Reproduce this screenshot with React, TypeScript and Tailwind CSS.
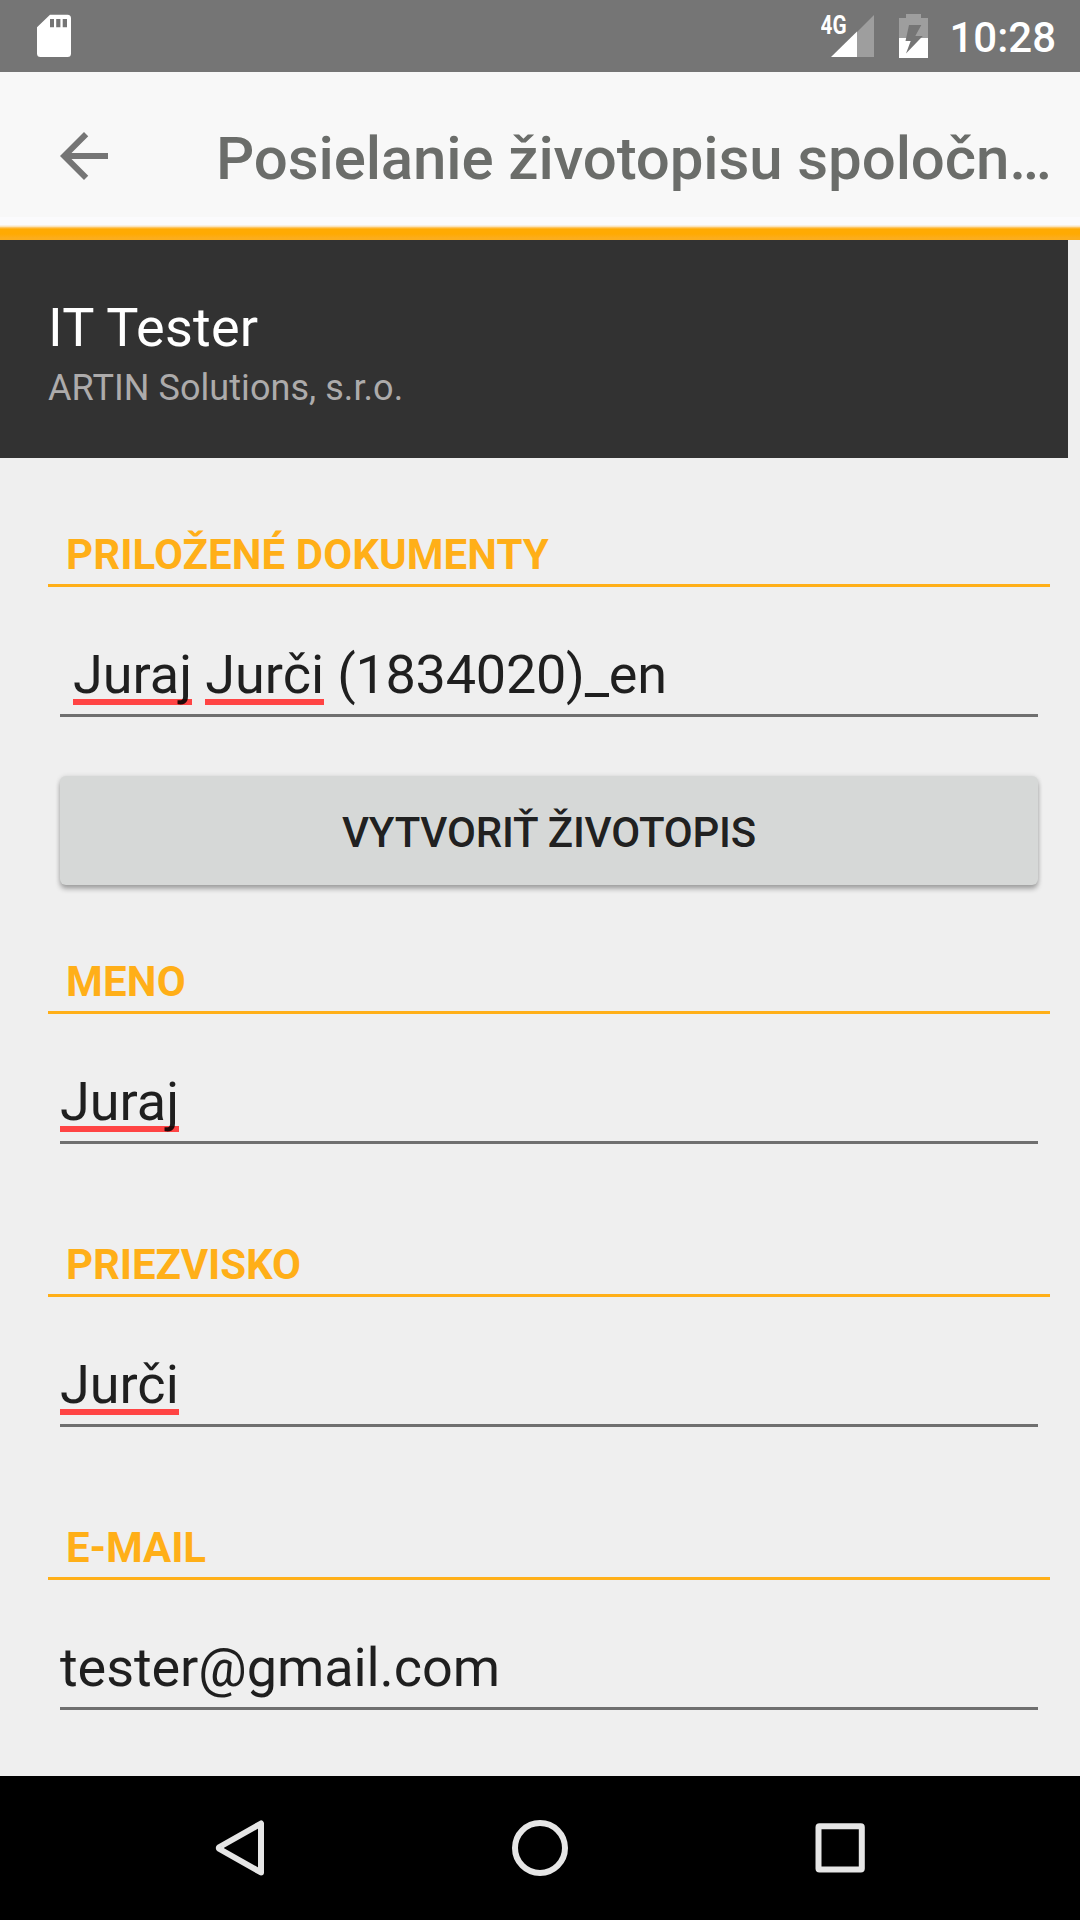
import React, { useState } from 'react';

interface Section {
  label: string;
  labelTracking: string;
  value: string;
  valueTracking: string;
  // words that the spell checker marks
  misspelled: string[];
  indent?: boolean;
  action?: string;
}

const sections: Section[] = [
  {
    label: 'PRILOŽENÉ DOKUMENTY',
    labelTracking: 'tracking-[0.08px]',
    value: 'Juraj Jurči (1834020)_en',
    valueTracking: 'tracking-[-0.25px]',
    misspelled: ['Juraj', 'Jurči'],
    indent: true,
    action: 'VYTVORIŤ ŽIVOTOPIS'
  },
  {
    label: 'MENO',
    labelTracking: 'tracking-[0.2px]',
    value: 'Juraj',
    valueTracking: 'tracking-normal',
    misspelled: ['Juraj']
  },
  {
    label: 'PRIEZVISKO',
    labelTracking: 'tracking-[-0.12px]',
    value: 'Jurči',
    valueTracking: 'tracking-normal',
    misspelled: ['Jurči']
  },
  {
    label: 'E-MAIL',
    labelTracking: 'tracking-[-0.1px]',
    value: 'tester@gmail.com',
    valueTracking: 'tracking-[-0.08px]',
    misspelled: []
  }
];

const StatusBar = () => (
  <div className="h-[72px] shrink-0 bg-[#757575] flex items-center pl-9 pr-6">
    {/* SD card */}
    <svg className="w-9 h-[72px]" viewBox="36 0 36 72">
      <path
        fill="#fff"
        fillRule="evenodd"
        d="M50 14.7H67.5Q71 14.7 71 18.2V53.5Q71 57 67.5 57H40.5Q37 57 37 53.5V27.3ZM50 19V27.3H54V19ZM56.2 19V27.3H60.4V19ZM62.7 19V27.3H67V19Z"
      />
    </svg>

    <div className="ml-auto flex items-center">
      {/* Signal */}
      <svg className="w-[54px] h-[72px]" viewBox="821 0 54 72">
        <path fill="#9e9e9e" d="M857 32L874 15V57H857Z" />
        <path fill="#fff" d="M831 57L857 31.5V57Z" />
        <text
          x="820.6"
          y="33.5"
          fill="#fff"
          fontSize="26"
          fontWeight="700"
          fontFamily="Roboto, sans-serif"
          textLength="26"
          lengthAdjust="spacingAndGlyphs"
        >
          4G
        </text>
      </svg>

      {/* Battery */}
      <svg className="ml-6 w-[30px] h-[72px]" viewBox="899 0 30 72">
        <path fill="#9e9e9e" d="M906 14H921V18H928V38H899V18H906Z" />
        <path fill="#fff" d="M899 38H928V58H899Z" />
        <path fill="#757575" d="M909 25H921.3L915.3 36H922.8L906 53.5L910.7 41H905.5Z" />
      </svg>

      <span className="ml-5 pt-[3px] text-[42px] leading-[48px] font-medium text-white">10:28</span>
    </div>
  </div>
);

const AppBar = () => (
  <header className="h-[168px] shrink-0 flex flex-col bg-[#f8f8f8]">
    <div className="h-[145px] flex items-start pl-12">
      <button className="mt-12">
        <svg className="size-[72px]" viewBox="0 0 24 24">
          <path
            fill="#757575"
            d="M20 11H7.83l5.59-5.59L12 4l-8 8 8 8 1.41-1.41L7.83 13H20v-2z"
          />
        </svg>
      </button>
      <h1 className="ml-24 mt-[51px] text-[60px] leading-[72px] tracking-[-0.12px] font-medium text-[#6b6d6a] whitespace-nowrap">
        Posielanie životopisu spoločn…
      </h1>
    </div>
    <div className="h-2 bg-[#fbfbfd]" />
    <div className="h-[15px] bg-[linear-gradient(to_bottom,#fbf8f4_0px,#fbe3b8_1.5px,#fdb83a_3px,#ffaa02_4.5px,#ffaa02_9px,#fcad1c_13px)]" />
  </header>
);

const FieldValue = ({ value, misspelled }: { value: string; misspelled: string[] }) => (
  <>
    {value.split(' ').map((word, index) => (
      <React.Fragment key={word}>
        {index > 0 && ' '}
        {misspelled.includes(word) ? (
          <span className="relative isolate inline-block tracking-normal">
            {word}
            <span className="absolute -z-10 left-0 right-0 top-[56px] h-1.5 bg-[#ff4444]" />
          </span>
        ) : (
          word
        )}
      </React.Fragment>
    ))}
  </>
);

const FormSection = ({ section }: { section: Section }) => (
  <section className="pl-12 pr-[30px]">
    <h2
      className={`pl-[18px] pb-[5px] border-b-[3px] border-[#ffaf18] text-[42px] leading-[48px] font-bold text-[#ffaf18] ${section.labelTracking}`}
    >
      {section.label}
    </h2>
    <div
      className={`mx-3 mt-14 pb-[7px] border-b-[3px] border-[#6f6f6f] text-[54px] leading-[64px] text-black/87 whitespace-nowrap ${
        section.valueTracking
      } ${section.indent ? 'pl-[13px]' : ''}`}
    >
      <FieldValue value={section.value} misspelled={section.misspelled} />
    </div>
    {section.action && (
      <div className="mx-3 mt-[59px] flex">
        <button className="h-[109px] flex-1 pt-1 rounded-md bg-[#d6d8d7] text-[42px] tracking-[-0.2px] font-medium text-black/87 shadow-[0_4px_5px_rgba(0,0,0,0.3),0_0_5px_rgba(0,0,0,0.1)]">
          {section.action}
        </button>
      </div>
    )}
  </section>
);

const NavigationBar = () => (
  <nav className="h-36 shrink-0 bg-black flex items-center justify-between px-[204px]">
    <button>
      <svg className="size-[72px]" viewBox="0 0 72 72" fill="none" stroke="#e6e6e6" strokeWidth="6" strokeLinejoin="round">
        <path d="M57 11.5V60.5L15.5 37Q14 36 15.5 35Z" />
      </svg>
    </button>
    <button>
      <svg className="size-[72px]" viewBox="0 0 72 72" fill="none" stroke="#e6e6e6" strokeWidth="6">
        <circle cx="36" cy="36" r="25" />
      </svg>
    </button>
    <button>
      <svg className="size-[72px]" viewBox="0 0 72 72" fill="none" stroke="#e6e6e6" strokeWidth="6">
        <rect x="14.5" y="14.3" width="43.3" height="43.3" rx="1" strokeLinejoin="round" />
      </svg>
    </button>
  </nav>
);

const App = () => {
  const [job] = useState({ title: 'IT Tester', company: 'ARTIN Solutions, s.r.o.' });

  return (
    <div className="w-[1080px] h-[1920px] flex flex-col overflow-hidden bg-[#efefef] font-['Roboto',sans-serif]">
      <StatusBar />
      <AppBar />

      {/* Job summary */}
      <div className="h-[218px] shrink-0 mr-3 pl-12 pt-14 bg-[#323232]">
        <p className="text-[54px] leading-[64px] tracking-[0.25px] text-white">{job.title}</p>
        <p className="mt-1.5 text-[36px] leading-[44px] tracking-[0.06px] text-[#adabab]">{job.company}</p>
      </div>

      {/* Form */}
      <main className="flex-1 min-h-0 pt-[73px] flex flex-col">
        {sections.map((section, index) => (
          <div
            key={section.label}
            className={index === 0 ? '' : sections[index - 1].action ? 'mt-[73px]' : 'mt-[97px]'}
          >
            <FormSection section={section} />
          </div>
        ))}
      </main>

      <NavigationBar />
    </div>
  );
};

export default App;
